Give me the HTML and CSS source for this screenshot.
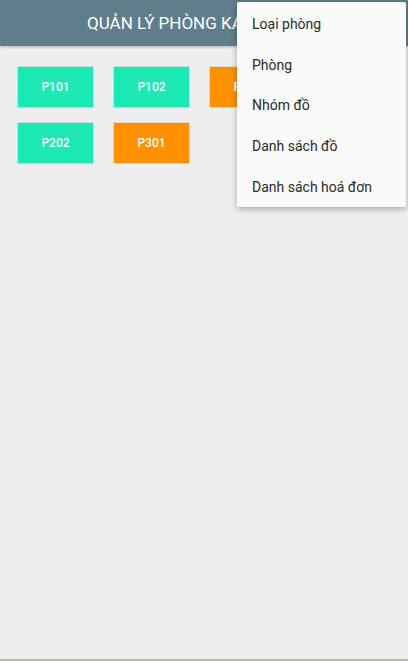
FILE: index.html
```html
<!DOCTYPE html>
<html lang="vi">
<head>
<meta charset="utf-8">
<title>Quản lý phòng karaoke</title>
<link rel="stylesheet" href="styles.css">
</head>
<body>
<div class="screen">
  <header class="appbar">
    <h1 class="title">QUẢN LÝ PHÒNG KARAOKE</h1>
  </header>
  <main class="rooms">
    <div class="room free">P101</div>
    <div class="room free">P102</div>
    <div class="room busy">P103</div>
    <div class="room free">P201</div>
    <div class="room free">P202</div>
    <div class="room busy">P301</div>
  </main>
  <div class="bottom-line"></div>
  <ul class="menu">
    <li class="menu-item">Loại phòng</li>
    <li class="menu-item">Phòng</li>
    <li class="menu-item">Nhóm đồ</li>
    <li class="menu-item">Danh sách đồ</li>
    <li class="menu-item">Danh sách hoá đơn</li>
  </ul>
</div>
</body>
</html>
```

FILE: styles.css
```css
* { box-sizing: border-box; }
html, body {
  margin: 0;
  padding: 0;
  background: #eeeeee;
  font-family: Roboto, "Noto Sans", sans-serif;
}
.screen {
  position: relative;
  width: 408px;
  height: 661px;
  display: flex;
  flex-direction: column;
  overflow: hidden;
}
.appbar {
  height: 46px;
  flex: none;
  background: #607d8b;
  display: flex;
  align-items: center;
  justify-content: flex-start;
  padding-left: 87px;
  box-shadow: 0 1px 3px rgba(0,0,0,0.25);
  position: relative;
  z-index: 1;
}
.title {
  margin: 0;
  color: #ffffff;
  font-size: 17px;
  font-weight: 400;
  letter-spacing: 0;
}
.rooms {
  flex: 1;
  display: flex;
  flex-wrap: wrap;
  align-content: flex-start;
  column-gap: 19px;
  row-gap: 14px;
  padding: 20px 0 0 17px;
}
.room {
  width: 77px;
  height: 42px;
  display: flex;
  align-items: center;
  justify-content: center;
  color: #ffffff;
  font-size: 12px;
  font-weight: 500;
  border: 1px solid #d9d9d9;
}
.room.free { background: #1de9b6; border-bottom-color: #b9dcd0; }
.room.busy { background: #ff9100; }
.bottom-line {
  height: 2px;
  flex: none;
  background: #b8bbb4;
}
.menu {
  position: absolute;
  top: 2px;
  left: 237px;
  width: 169px;
  margin: 0;
  padding: 2px 0 0;
  list-style: none;
  background: #fafafa;
  border-radius: 2px;
  box-shadow: 0 2px 6px rgba(0,0,0,0.3);
  z-index: 2;
  height: 205px;
}
.menu-item {
  height: 40.6px;
  display: flex;
  align-items: center;
  padding-left: 15px;
  font-size: 14px;
  color: #2a2a2a;
}
```
